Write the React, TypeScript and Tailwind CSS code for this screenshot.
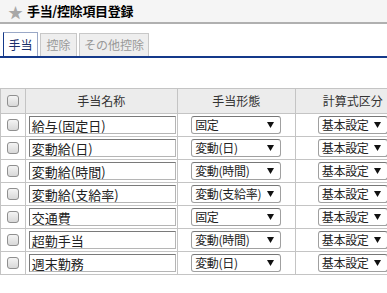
const rows = [
  { name: '給与(固定日)', kind: '固定' },
  { name: '変動給(日)', kind: '変動(日)' },
  { name: '変動給(時間)', kind: '変動(時間)' },
  { name: '変動給(支給率)', kind: '変動(支給率)' },
  { name: '交通費', kind: '固定' },
  { name: '超勤手当', kind: '変動(時間)' },
  { name: '週末勤務', kind: '変動(日)' },
];

function Check() {
  return <span className="block w-[12px] h-[12px] mx-auto rounded-[3px] border border-[#8f8f8f] bg-gradient-to-b from-[#f4f4f4] to-[#d8d8d8]" />;
}

function Select({ value, w }: { value: string; w: string }) {
  return (
    <div className={`${w} mx-auto h-[18px] flex items-center justify-between pl-[3px] pr-[6px] rounded-[3px] border border-[#a0a0a0] border-t-[#777] bg-white`}>
      <span className="whitespace-nowrap tracking-[-0.3px]">{value}</span>
      <svg width="7" height="6" viewBox="0 0 7 6" className="shrink-0">
        <path d="M0 0H7L3.5 6Z" fill="#111" />
      </svg>
    </div>
  );
}

export default function App() {
  return (
    <div className="w-[387px] h-[293px] overflow-hidden bg-white text-[#222]" style={{ fontFamily: '"Noto Sans CJK JP", "Noto Sans", sans-serif' }}>
      {/* Header */}
      <div className="h-[24px] flex items-center gap-[4px] pl-[8px] bg-[#f5f5f5] border-b-2 border-[#b0b0b0]">
        <span className="text-[15px] leading-none text-[#a8a8a8]">★</span>
        <h1 className="text-[13px] font-bold text-black tracking-tight">手当/控除項目登録</h1>
      </div>

      {/* Tabs */}
      <div className="mt-[8px] flex items-end gap-[2px] pl-[3px] border-b-2 border-[#14398a]">
        <div className="h-[24px] w-[35px] flex items-center justify-center bg-white border-l border-t border-r border-l-[#14398a] border-t-[#9aa8c6] border-r-[#9aa8c6] text-[12px] text-[#1a2f6b]">手当</div>
        <div className="h-[23px] w-[37px] flex items-center justify-center bg-[#eee] border border-b-0 border-[#c8c8c8] text-[12px] text-[#999]">控除</div>
        <div className="h-[23px] w-[70px] flex items-center justify-center bg-[#eee] border border-b-0 border-[#c8c8c8] text-[12px] text-[#999]">その他控除</div>
      </div>

      {/* Table */}
      <table className="mt-[30px] w-[411px] border-collapse text-[12px]">
        <thead>
          <tr className="h-[25px] bg-[#ececec] text-[12px] text-[#333]">
            <th className="w-[25px] border border-[#c4c4c4] font-normal"><Check /></th>
            <th className="w-[152px] border border-[#c4c4c4] font-normal">手当名称</th>
            <th className="w-[118px] border border-[#c4c4c4] font-normal">手当形態</th>
            <th className="w-[116px] border border-[#c4c4c4] font-normal">計算式区分</th>
          </tr>
        </thead>
        <tbody>
          {rows.map((r) => (
            <tr key={r.name} className="h-[23px]">
              <td className="border border-[#c4c4c4]"><Check /></td>
              <td className="border border-[#c4c4c4] pl-[3px] pr-[1px]">
                <div className="h-[18px] w-[147px] flex items-center px-[2px] border border-[#7a7a7a] border-b-[#b5b5b5] border-r-[#b5b5b5] bg-white whitespace-nowrap leading-none text-[13px]">{r.name}</div>
              </td>
              <td className="border border-[#c4c4c4]">
                <Select value={r.kind} w="w-[90px]" />
              </td>
              <td className="border border-[#c4c4c4]">
                <Select value="基本設定" w="w-[70px]" />
              </td>
            </tr>
          ))}
        </tbody>
      </table>
    </div>
  );
}
